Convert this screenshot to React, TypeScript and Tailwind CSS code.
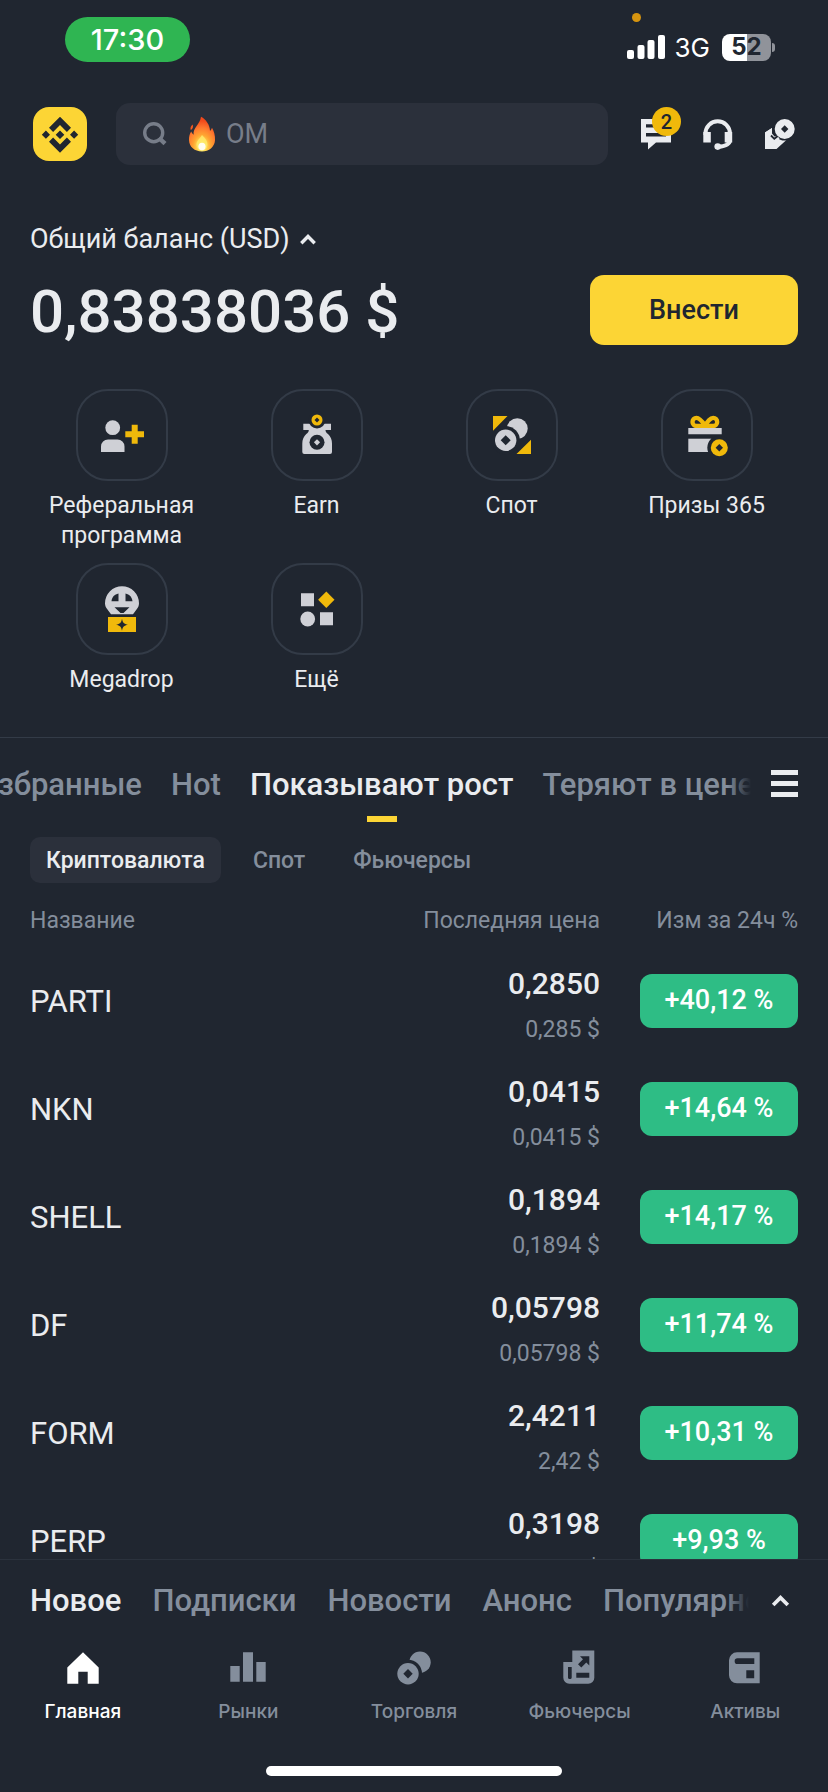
import { useState } from 'react';
import clsx from 'clsx';

const shortcuts = [
  { label: 'Реферальная программа', icon: <ReferralIcon /> },
  { label: 'Earn', icon: <EarnIcon /> },
  { label: 'Спот', icon: <SpotIcon /> },
  { label: 'Призы 365', icon: <GiftIcon /> },
  { label: 'Megadrop', icon: <MegadropIcon /> },
  { label: 'Ещё', icon: <MoreIcon /> },
];

const marketTabs = ['Избранные', 'Hot', 'Показывают рост', 'Теряют в цене'];
const marketFilters = ['Криптовалюта', 'Спот', 'Фьючерсы'];
const feedTabs = ['Новое', 'Подписки', 'Новости', 'Анонс', 'Популярное'];

const rows = [
  { name: 'PARTI', price: '0,2850', usd: '0,285 $', change: '+40,12 %' },
  { name: 'NKN', price: '0,0415', usd: '0,0415 $', change: '+14,64 %' },
  { name: 'SHELL', price: '0,1894', usd: '0,1894 $', change: '+14,17 %' },
  { name: 'DF', price: '0,05798', usd: '0,05798 $', change: '+11,74 %' },
  { name: 'FORM', price: '2,4211', usd: '2,42 $', change: '+10,31 %' },
  { name: 'PERP', price: '0,3198', usd: '0,3198 $', change: '+9,93 %' },
];

const navItems = [
  { label: 'Главная', icon: <HomeIcon /> },
  { label: 'Рынки', icon: <MarketsIcon /> },
  { label: 'Торговля', icon: <TradeIcon /> },
  { label: 'Фьючерсы', icon: <FuturesIcon /> },
  { label: 'Активы', icon: <AssetsIcon /> },
];

export default function App() {
  return (
    <div className="flex h-screen flex-col overflow-hidden bg-[#202630] font-['Roboto',sans-serif] text-[#eaecef]">
      <StatusBar />
      <Header />
      <main className="min-h-0 flex-1 overflow-hidden">
        <Balance />
        <Shortcuts />
        <Markets />
      </main>
      <Footer />
    </div>
  );
}

function StatusBar() {
  return (
    <div className="relative flex h-[84px] shrink-0 items-start justify-between pr-[53px] pl-[65px] font-['Inter',sans-serif] text-white">
      <div className="mt-[17px] flex h-[45px] w-[125px] items-center justify-center rounded-full bg-[#2fb552] text-[29px] font-medium">
        17:30
      </div>
      <span className="absolute top-[13px] right-[187px] size-[9px] rounded-full bg-[#d6940f]" />
      <div className="mt-[33px] flex h-7 items-center">
        <svg width="38" height="26" viewBox="0 0 38 26" fill="currentColor" aria-hidden="true">
          <rect x="0" y="16" width="7" height="9" rx="2" />
          <rect x="10.5" y="11" width="7" height="14" rx="2" />
          <rect x="20.5" y="6" width="7" height="19" rx="2" />
          <rect x="31" y="1" width="7" height="24" rx="2" />
        </svg>
        <span className="ml-[10px] text-[26px]">3G</span>
        <span className="ml-3 flex h-[27px] w-[49px] items-center justify-center rounded-lg bg-linear-to-r from-white from-52% to-[#90939a] to-52% text-[24px] font-bold text-[#202630]">
          52
        </span>
        <span className="ml-px h-[9px] w-[3px] rounded-r-full bg-[#90939a]" />
      </div>
    </div>
  );
}

function Header() {
  return (
    <header className="flex h-[100px] shrink-0 items-center pr-8 pl-[33px]">
      <button aria-label="Binance" className="shrink-0">
        <svg width="54" height="54" viewBox="0 0 54 54">
          <rect width="54" height="54" rx="16" fill="#fcd535" />
          <path
            d="M27 9.7 38 20.7 33.9 24.9 27 18l-6.9 6.9-4.1-4.2ZM27 45.7 38 34.7l-4.1-4.2L27 37.4l-6.9-6.9-4.1 4.2ZM27 23.4l4.3 4.3L27 32l-4.3-4.3ZM12.9 23.6l4.1 4.1-4.1 4.1-4.1-4.1ZM41.1 23.6l4.1 4.1-4.1 4.1-4.1-4.1Z"
            fill="#202630"
          />
        </svg>
      </button>
      <label className="mr-8 ml-[29px] flex h-[62px] flex-1 items-center rounded-[14px] bg-[#2b303b] pl-[27px]">
        <svg width="24" height="24" viewBox="0 0 24 24" fill="none" stroke="#777d89" aria-hidden="true">
          <circle cx="10.7" cy="10.7" r="9" strokeWidth="3.4" />
          <path d="m16 16 6 5.6" strokeWidth="4.4" />
        </svg>
        <svg width="28" height="36" viewBox="0 0 28 36" className="ml-[21px]" aria-hidden="true">
          <defs>
            <radialGradient id="flame" cx="50%" cy="86%" r="75%">
              <stop offset="0%" stopColor="#fffbe6" />
              <stop offset="18%" stopColor="#ffe45c" />
              <stop offset="45%" stopColor="#ffa531" />
              <stop offset="72%" stopColor="#ff7a2f" />
              <stop offset="100%" stopColor="#f2491b" />
            </radialGradient>
          </defs>
          <path
            d="M13 .8c5 2.500 9 8.500 9 14.200 1-1 1.600-2 2-3.200 2 3.500 3.300 8 3 12.400C26.600 31 21 35.400 14 35.400 6.600 35.400 1.200 31 1 24c-.1-3.300.7-6.200 2.200-8.400.6 1.500 1.300 2.400 2.400 3.200C4.800 11.500 12 8.500 13 .8ZM4.600 8.400c1 2 .2 4.200-1.800 5.600-.8-2.200 0-4.200 1.800-5.600Z"
            fill="url(#flame)"
          />
          <path d="M14 19c3 3 6 6 5.400 10.600-.5 3.200-2.800 5-5.400 5s-5-1.800-5.500-5C8 25 11.500 23 14 19Z" fill="#ffec6b" opacity=".8" />
          <ellipse cx="14" cy="30.500" rx="3.600" ry="3.800" fill="#fffdf0" />
        </svg>
        <input
          type="text"
          aria-label="Поиск"
          placeholder="OM"
          className="ml-[10px] min-w-0 flex-1 bg-transparent text-[27px] outline-none placeholder:text-[#777d89]"
        />
      </label>
      <div className="flex gap-[30px]">
        <button aria-label="Сообщения" className="relative">
          <svg width="32" height="32" viewBox="0 0 32 32">
            <path fillRule="evenodd" d="M1 1h30v23.500H16L8 31.500v-7H1ZM6 6.200v3.300h18V6.200ZM6 15v3.400h20V15Z" fill="#eaecef" />
          </svg>
          <span className="absolute -top-[11px] left-3 flex size-[29px] items-center justify-center rounded-full bg-[#f0b90b] text-[20px] font-medium text-[#202630]">
            2
          </span>
        </button>
        <button aria-label="Поддержка">
          <svg width="32" height="32" viewBox="0 0 32 32" fill="none" stroke="#eaecef">
            <path d="M3.500 17v-1.500a12.200 12.200 0 0 1 24.400 0V22c0 3.500-4 6.200-11.500 6.800" strokeWidth="4" />
            <path d="M1.300 14h7.500v10.600H1.300ZM22.700 14h7.500v10.600h-7.500Z" fill="#eaecef" stroke="none" />
            <circle cx="15.700" cy="28.600" r="3.300" fill="#eaecef" stroke="none" />
          </svg>
        </button>
        <button aria-label="P2P">
          <svg width="32" height="32" viewBox="0 0 32 32" fill="#eaecef">
            <path d="M1 14.500 8 10v5.500l2.500 3L20 17l3.500 4L12.500 31H1Z" />
            <circle cx="20.700" cy="11" r="11.500" fill="#202630" />
            <path d="M1 14.500 8 10v7l2.500 2.500 2.500-2 2.500 3-3 6H1Z" />
            <path d="m7 17.500 3.300 3.300 3.500-2.800" fill="none" stroke="#202630" strokeWidth="1.800" />
            <path fillRule="evenodd" d="M20.700 1a10 10 0 1 1 0 20 10 10 0 0 1 0-20Zm0 6.300L17 11l3.700 3.700 3.700-3.700Z" />
          </svg>
        </button>
      </div>
    </header>
  );
}

function Balance() {
  return (
    <section className="px-[30px] pt-[39px]">
      <button className="flex items-center text-[27px] leading-8">
        Общий баланс (USD)
        <ChevronUp className="ml-[10px] h-[11px] w-4" />
      </button>
      <div className="mt-5 flex items-center justify-between">
        <p className="pt-1 text-[60px] leading-[66px] font-medium">0,83838036 $</p>
        <button className="h-[70px] w-[208px] rounded-[14px] bg-[#fcd535] text-[27px] font-medium text-[#202630]">
          Внести
        </button>
      </div>
    </section>
  );
}

function Shortcuts() {
  return (
    <section className="grid grid-cols-4 gap-y-3 border-b border-[#333b47] px-6 pt-11 pb-[42px]">
      {shortcuts.map((item) => (
        <button key={item.label} className="flex flex-col items-center gap-[10px]">
          <span className="flex size-[92px] items-center justify-center rounded-[32px] border-2 border-[#333b47]">
            {item.icon}
          </span>
          <span className="max-w-[160px] text-[23px] leading-[30px]">{item.label}</span>
        </button>
      ))}
    </section>
  );
}

function Markets() {
  const [tab, setTab] = useState('Показывают рост');
  const [filter, setFilter] = useState('Криптовалюта');

  return (
    <section>
      <div className="flex h-[84px] items-center pr-[30px]">
        <nav className="relative min-w-0 flex-1 overflow-hidden">
          <div className="-ml-6 flex gap-[29px]">
            {marketTabs.map((name) => (
              <button
                key={name}
                onClick={() => setTab(name)}
                className={clsx(
                  'relative h-[84px] shrink-0 pt-[10px] text-[31px] font-medium',
                  tab === name ? 'text-[#eaecef]' : 'text-[#848e9c]',
                )}
              >
                {name}
                {tab === name && (
                  <span className="absolute bottom-0 left-1/2 h-[6px] w-[30px] -translate-x-1/2 bg-[#fcd535]" />
                )}
              </button>
            ))}
          </div>
          <span className="absolute inset-y-0 right-0 w-6 bg-linear-to-r from-transparent to-[#202630]" />
        </nav>
        <button aria-label="Меню" className="mt-[6px] ml-5 flex flex-col gap-[6px]">
          <span className="h-[5px] w-[27px] bg-[#eaecef]" />
          <span className="h-[5px] w-[27px] bg-[#eaecef]" />
          <span className="h-[5px] w-[27px] bg-[#eaecef]" />
        </button>
      </div>

      <div className="mt-[15px] flex gap-4 px-[30px]">
        {marketFilters.map((name) => (
          <button
            key={name}
            onClick={() => setFilter(name)}
            className={clsx(
              'h-[46px] rounded-[10px] px-4 pt-[2px] text-[23px] font-medium',
              filter === name ? 'bg-[#2b303b] text-[#eaecef]' : 'text-[#848e9c]',
            )}
          >
            {name}
          </button>
        ))}
      </div>

      <div className="px-[30px] pt-[21px]">
        <table className="w-full">
          <thead>
            <tr className="text-[23px] leading-[34px] text-[#848e9c]">
              <th className="text-left font-normal">Название</th>
              <th className="text-right font-normal">Последняя цена</th>
              <th className="w-[198px] text-right font-normal">Изм за 24ч %</th>
            </tr>
          </thead>
          <tbody>
            {rows.map((row) => (
              <tr key={row.name} className="h-[108px]">
                <td className="pt-5 text-[31px]">{row.name}</td>
                <td className="pt-7 text-right">
                  <p className="text-[30px] leading-9 font-medium">{row.price}</p>
                  <p className="pt-3 text-[23px] leading-8 text-[#848e9c]">{row.usd}</p>
                </td>
                <td className="pt-[17px] pl-10">
                  <button className="h-[54px] w-full rounded-[12px] bg-[#2ebd85] text-[27px] font-medium text-white">
                    {row.change}
                  </button>
                </td>
              </tr>
            ))}
          </tbody>
        </table>
      </div>
    </section>
  );
}

function Footer() {
  const [feed, setFeed] = useState('Новое');
  const [page, setPage] = useState('Главная');

  return (
    <footer className="shrink-0 border-t border-[#2b323d] bg-[#202630]">
      <div className="flex h-[82px] items-center pr-[38px] pl-[30px]">
        <div className="relative min-w-0 flex-1 overflow-hidden">
          <div className="flex gap-[31px]">
            {feedTabs.map((name) => (
              <button
                key={name}
                onClick={() => setFeed(name)}
                className={clsx(
                  'shrink-0 text-[31px] font-medium',
                  feed === name ? 'text-[#eaecef]' : 'text-[#848e9c]',
                )}
              >
                {name}
              </button>
            ))}
          </div>
          <span className="absolute inset-y-0 right-0 w-6 bg-linear-to-r from-transparent to-[#202630]" />
        </div>
        <button aria-label="Развернуть" className="ml-[22px]">
          <ChevronUp className="h-3 w-[19px]" />
        </button>
      </div>
      <nav className="grid grid-cols-5 pt-2">
        {navItems.map((item) => (
          <button
            key={item.label}
            onClick={() => setPage(item.label)}
            className={clsx(
              'flex flex-col items-center gap-[14px]',
              page === item.label ? 'text-white' : 'text-[#848e9c]',
            )}
          >
            {item.icon}
            <span className="font-['Inter',sans-serif] text-[19px] leading-6 font-medium">{item.label}</span>
          </button>
        ))}
      </nav>
      <div className="mx-auto mt-[42px] mb-4 h-[10px] w-[296px] rounded-full bg-white" />
    </footer>
  );
}

function ChevronUp({ className }: { className?: string }) {
  return (
    <svg viewBox="0 0 16 11" fill="none" stroke="#eaecef" strokeWidth="3.400" className={className} aria-hidden="true">
      <path d="m1.300 9.200 6.700-6.700 6.700 6.700" />
    </svg>
  );
}

function ReferralIcon() {
  return (
    <svg width="48" height="48" viewBox="0 0 48 48" fill="#cfd0d6" aria-hidden="true">
      <circle cx="14.700" cy="16.700" r="7.400" />
      <path d="M3 41v-5.500a7 7 0 0 1 7-7h9.500a7 7 0 0 1 7 7V41Z" />
      <path d="M33.700 13.700h6v6.500H46v6h-6.300v6.500h-6v-6.500h-6.400v-6h6.400Z" fill="#f0b90b" />
    </svg>
  );
}

function EarnIcon() {
  return (
    <svg width="48" height="48" viewBox="0 0 48 48" fill="#cfd0d6" aria-hidden="true">
      <path d="M10.300 12.700H38v6.200h-5.500c0 1.700 1 2.800 2.500 4.200 2.600 2.400 4 5.500 4 9.500V41a2 2 0 0 1-2 2H11.300a2 2 0 0 1-2-2v-8.400c0-4 1.400-7.100 4-9.500 1.500-1.400 2.500-2.500 2.500-4.200h-5.500Z" />
      <circle cx="24" cy="31.300" r="7.500" fill="#202630" />
      <path d="m24 28.200 3.100 3.100-3.100 3.100-3.100-3.100Z" />
      <circle cx="24" cy="9" r="8.500" fill="#202630" />
      <circle cx="24" cy="9" r="5.500" fill="#f0b90b" />
      <path d="m24 6.500 2.500 2.500-2.500 2.500L21.500 9Z" fill="#202630" />
    </svg>
  );
}

function SpotIcon() {
  return (
    <svg width="48" height="48" viewBox="0 0 48 48" fill="#cfd0d6" aria-hidden="true">
      <path d="M5 5h14.500L5 19.700ZM43 28.700V43H28.500Z" fill="#f0b90b" />
      <circle cx="29.300" cy="17.600" r="10.400" />
      <circle cx="17.700" cy="29.300" r="14.200" fill="#202630" />
      <circle cx="17.700" cy="29.300" r="10.700" />
      <path d="m17.700 24.300 5 5-5 5-5-5Z" fill="#202630" />
    </svg>
  );
}

function GiftIcon() {
  return (
    <svg width="48" height="48" viewBox="0 0 48 48" fill="#cfd0d6" aria-hidden="true">
      <path d="M22 14.500c-3-4.500-5.500-7.600-8.500-7.600-2.400 0-4 1.700-4 4s1.600 4.100 4 4.100H30.200c2.400 0 4-1.800 4-4.100s-1.600-4-4-4c-3 0-5.200 3.100-8.200 7.600Z" fill="none" stroke="#f0b90b" strokeWidth="4.300" strokeLinejoin="round" />
      <path d="M5.300 27.700h23V41h-23Z" />
      <circle cx="36.300" cy="36.700" r="12" fill="#202630" />
      <path d="M5.300 17h33.400v6.300H5.300Z" />
      <circle cx="36.300" cy="36.700" r="8.500" fill="#f0b90b" />
      <path d="m36.300 33 3.700 3.700-3.700 3.700-3.700-3.700Z" fill="#202630" />
    </svg>
  );
}

function MegadropIcon() {
  return (
    <svg width="48" height="48" viewBox="0 0 48 48" aria-hidden="true">
      <path
        fillRule="evenodd"
        d="M24 1.300a17 17 0 0 1 17 17c0 2.500-1 4.500-2.300 6L35 29.200H13l-3.700-4.900C8 22.800 7 20.800 7 18.300a17 17 0 0 1 17-17ZM20.500 8.500c-4 .8-6.600 3.500-7 7.800h7Zm7 0v7.800h7c-.4-4.300-3-7-7-7.800ZM16.500 22.300l6 5.700h3l6-5.700Z"
        fill="#cfd0d6"
      />
      <path d="M10 32h28v15H10Z" fill="#f0b90b" />
      <path d="M24 33.700c.7 3.900 2 5.300 6 6-4 .7-5.300 2.100-6 6-.7-3.900-2-5.300-6-6 4-.7 5.300-2.100 6-6Z" fill="#202630" />
    </svg>
  );
}

function MoreIcon() {
  return (
    <svg width="48" height="48" viewBox="0 0 48 48" fill="#cfd0d6" aria-hidden="true">
      <path d="M8 8.300h13v13H8ZM27 27.300h13v13H27Z" />
      <circle cx="14.700" cy="34" r="7.400" />
      <path d="m33.300 6.500 8.200 8.200-8.200 8.200-8.200-8.200Z" fill="#f0b90b" />
    </svg>
  );
}

function HomeIcon() {
  return (
    <svg width="36" height="36" viewBox="0 0 36 36" fill="currentColor" aria-hidden="true">
      <path d="m18 2.300 15.700 15.300v16.100H22.700V21.700H13.300v12H2.300V17.600Z" />
    </svg>
  );
}

function MarketsIcon() {
  return (
    <svg width="36" height="36" viewBox="0 0 36 36" fill="currentColor" aria-hidden="true">
      <path d="M.3 16h9.400v15.700H.3ZM13 2.300h10v29.400H13ZM26.300 12h9.400v19.700h-9.400Z" />
    </svg>
  );
}

function TradeIcon() {
  return (
    <svg width="36" height="36" viewBox="0 0 36 36" fill="currentColor" aria-hidden="true">
      <circle cx="24" cy="12.300" r="10.700" />
      <circle cx="12" cy="23.700" r="14" fill="#202630" />
      <circle cx="12" cy="23.700" r="10.700" />
      <path d="m12 19 4.700 4.700-4.700 4.700-4.700-4.700Z" fill="#202630" />
    </svg>
  );
}

function FuturesIcon() {
  return (
    <svg width="36" height="36" viewBox="0 0 36 36" fill="currentColor" aria-hidden="true">
      <path d="M10.300.5h22V27.700a6 6 0 0 1-6 6h-19a6 6 0 0 1-6-6V12h9Z" />
      <path
        d="M6 17h3.700v10.500c0 2-3.700 2-3.700 0ZM14.300 22.700h13v5h-13ZM18 6.300h9.300v9.300l-3-3-5 5-3.300-3.300 5-5Z"
        fill="#202630"
      />
    </svg>
  );
}

function AssetsIcon() {
  return (
    <svg width="36" height="36" viewBox="0 0 36 36" fill="currentColor" aria-hidden="true">
      <path d="M10 2.300h22.700v31H10a8 8 0 0 1-8-8v-15a8 8 0 0 1 8-8Z" />
      <path d="M10.500 8.300h16.800V14H10.500a2.850 2.850 0 0 1 0-5.700ZM19.300 20.300h7.900v7.900h-7.900Z" fill="#202630" />
    </svg>
  );
}
